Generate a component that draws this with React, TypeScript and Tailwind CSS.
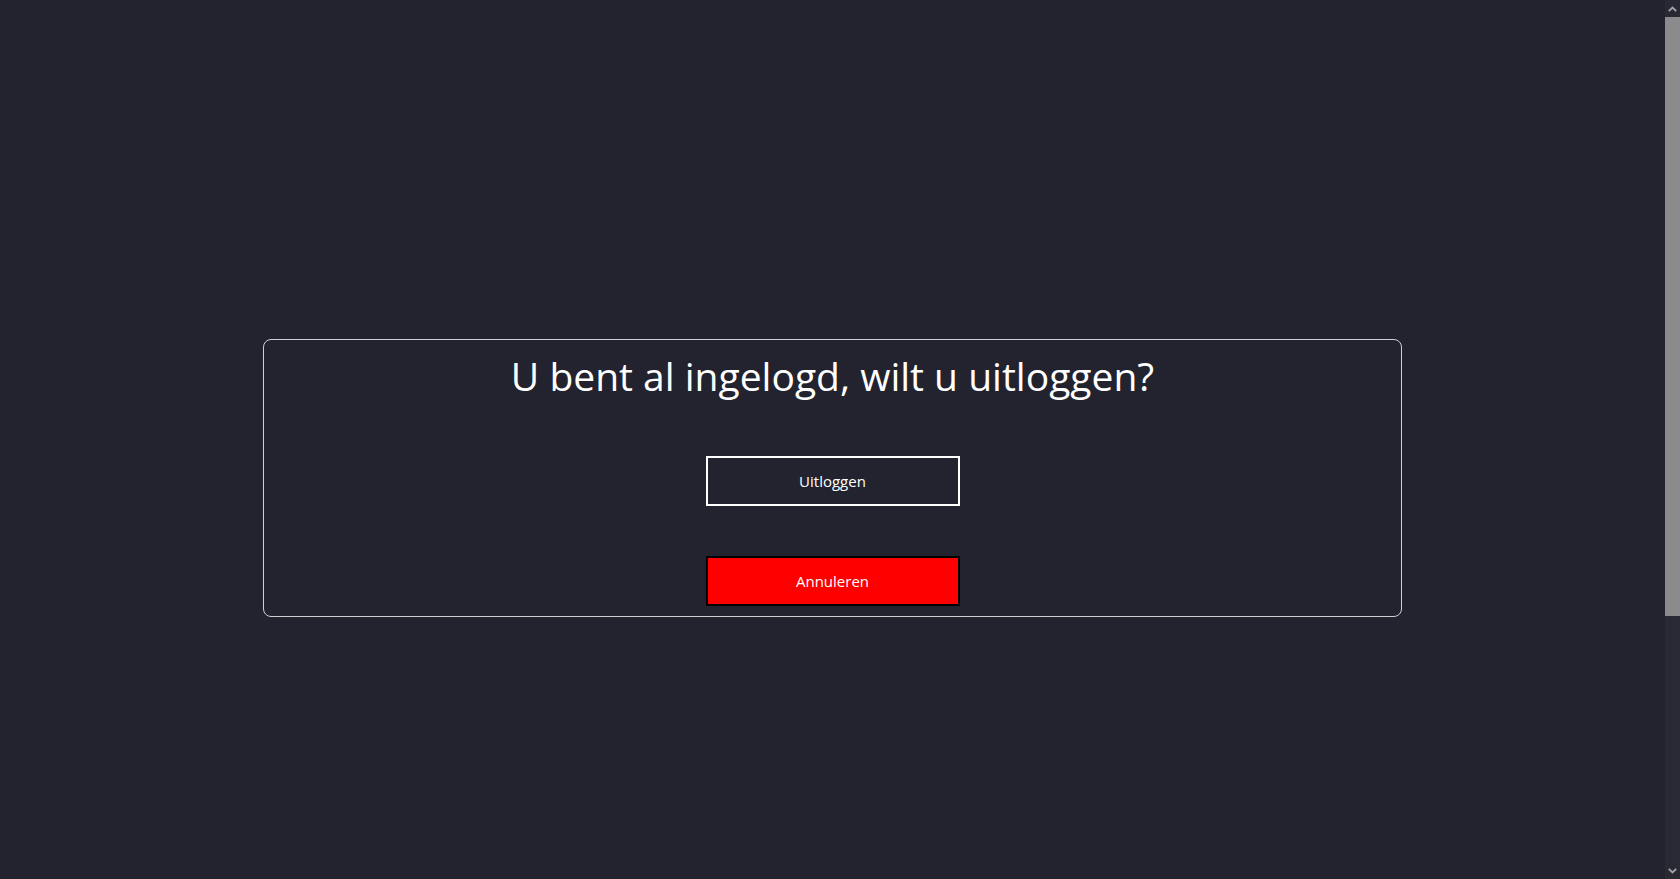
function Chevron({ up }: { up?: boolean }) {
  return (
    <svg width="9" height="6" viewBox="0 0 9 6" className={up ? "" : "rotate-180"}>
      <path d="M0.8 5.2 L4.5 1.5 L8.2 5.2" fill="none" stroke="#a3a3a8" strokeWidth="1.8" />
    </svg>
  );
}

export default function App() {
  return (
    <div className="flex h-[879px] overflow-hidden bg-[#232330] font-['Open_Sans',sans-serif] text-white">
      <main className="flex-1 pt-[339px]">
        <div className="mx-auto flex w-[1139px] flex-col items-center rounded-lg border border-[#cfcfd4] pb-[10px]">
          <h1 className="mt-[12px] text-[39px] leading-[48px]">U bent al ingelogd, wilt u uitloggen?</h1>
          <button className="mt-[56px] h-[50px] w-[254px] border-2 border-white bg-transparent text-[15px] text-white">
            Uitloggen
          </button>
          <button className="mt-[50px] h-[50px] w-[254px] border-2 border-black bg-[#ff0000] text-[15px] text-white">
            Annuleren
          </button>
        </div>
      </main>
      <div className="flex w-[15px] flex-col bg-[#292934]">
        <div className="flex h-[17px] items-center justify-center">
          <Chevron up />
        </div>
        <div className="h-[599px] bg-[#8b8b8e]" />
        <div className="flex-1" />
        <div className="flex h-[17px] items-center justify-center">
          <Chevron />
        </div>
      </div>
    </div>
  );
}
